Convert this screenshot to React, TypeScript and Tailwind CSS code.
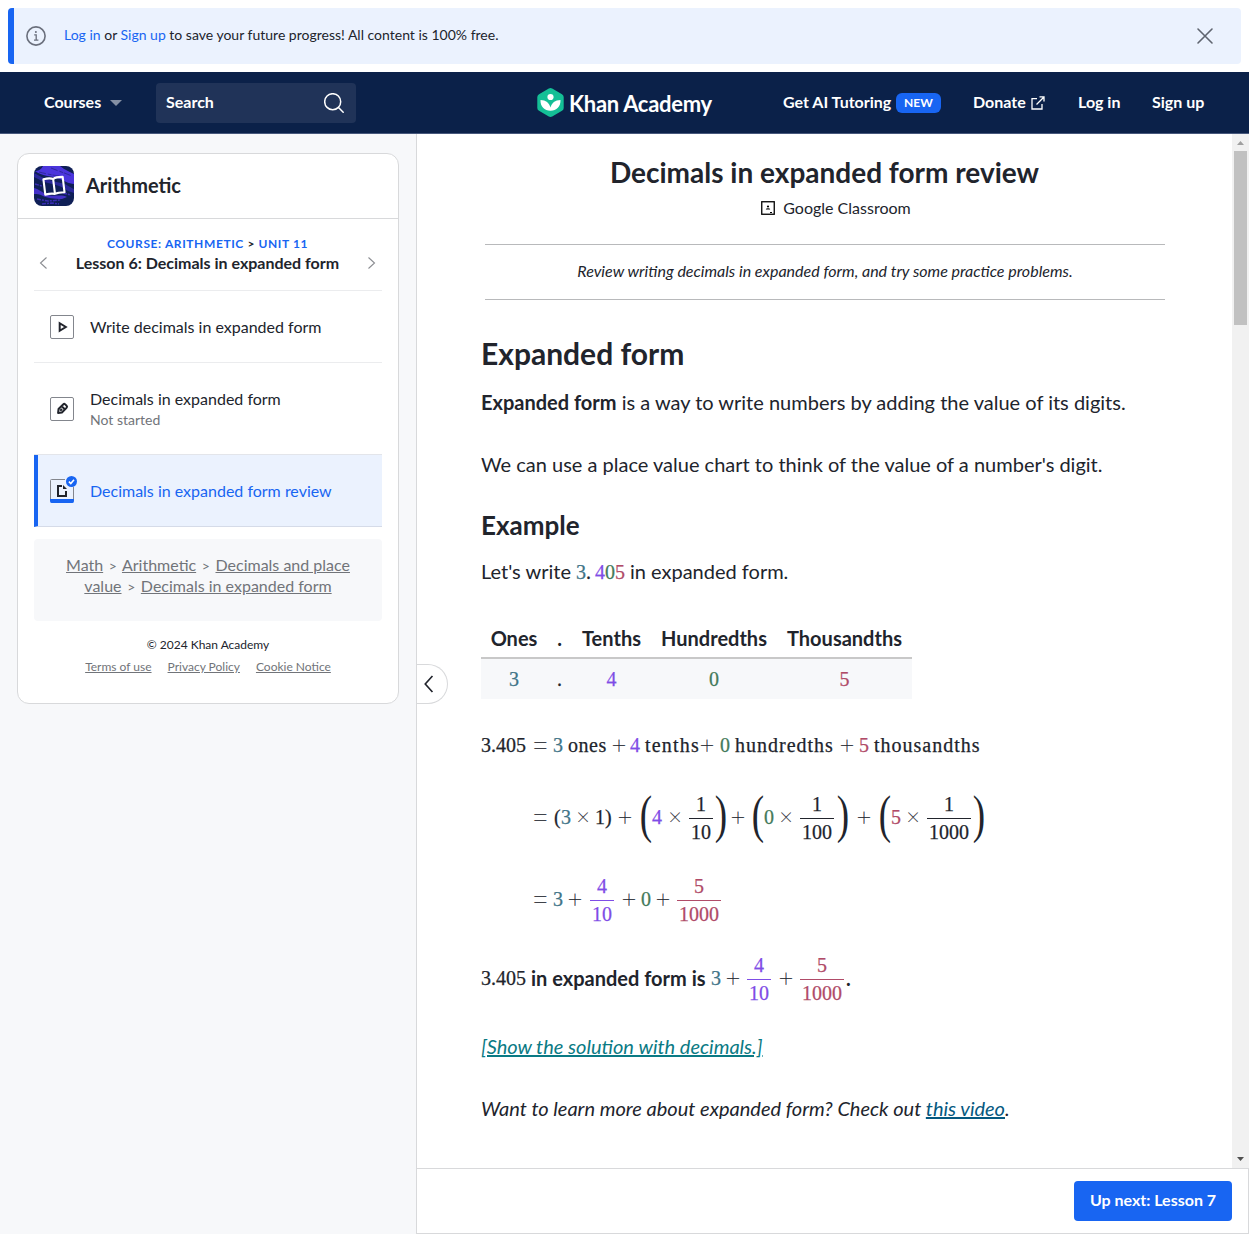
import React from "react";

const TEAL = "text-[#3f7487]";
const PURPLE = "text-[#7f4de6]";
const GREEN = "text-[#447a5a]";
const RED = "text-[#b04b68]";

const OP_SIZE: Record<string, string> = {
  "×": "text-[23px]",
  "+": "text-[29px]",
  "=": "text-[29px] scale-x-[1.2]",
};

function Op({ ch, className = "" }: { ch: string; className?: string }) {
  return (
    <span className={"-mt-0.5 inline-flex w-4 shrink-0 justify-center text-[#21242c] " + className}>
      <span className={"block font-['Inter'] font-thin leading-[30px] [-webkit-text-stroke:0.2px] " + OP_SIZE[ch]}>{ch}</span>
    </span>
  );
}

function Num({ children, className = "" }: { children: React.ReactNode; className?: string }) {
  return <span className={"inline-block w-2.5 shrink-0 text-center " + className}>{children}</span>;
}

function Word({ children, className = "" }: { children: React.ReactNode; className?: string }) {
  return <span className={"inline-block shrink-0 whitespace-nowrap " + className}>{children}</span>;
}

function Paren({ ch, className = "" }: { ch: string; className?: string }) {
  return (
    <span className={"-mt-1.5 inline-flex h-[60px] w-3 shrink-0 items-center justify-center [-webkit-text-stroke:0px] " + className}>
      <span className="block scale-x-[0.7] text-[53px] leading-[60px]">{ch}</span>
    </span>
  );
}

function Frac({ top, bottom, className = "" }: { top: string; bottom: string; className?: string }) {
  return (
    <span className={"mt-[3px] inline-flex shrink-0 flex-col self-start text-center " + className}>
      <span className="block h-7 leading-7">{top}</span>
      <span className="block h-px bg-current" />
      <span className="block h-[26px] leading-[26px]">{bottom}</span>
    </span>
  );
}

function MathRow({ children, className = "" }: { children: React.ReactNode; className?: string }) {
  return (
    <div className={"flex items-center font-['Liberation_Serif',serif] text-[20px] leading-[30px] [-webkit-text-stroke:0.25px] " + className}>
      {children}
    </div>
  );
}

function Banner() {
  return (
    <div className="mx-2 mt-2 flex h-14 shrink-0 items-center rounded border-l-[6px] border-[#1865f2] bg-[#ebf2fe] pl-3 pr-[27px]">
      <svg width="20" height="20" viewBox="0 0 20 20" fill="none" stroke="#6a6f7c" strokeWidth="1.6">
        <circle cx="10" cy="10" r="9.1" />
        <path d="M8.2 8.8H10.2V14M8 14.2H12.4" strokeWidth="1.3" />
        <circle cx="9.900" cy="6" r="1" fill="#6a6f7c" stroke="none" />
      </svg>
      <p className="ml-[18px] mt-[-2px] flex-1 text-[14px] leading-5">
        <span className="text-[#1865f2]">Log in</span> or <span className="text-[#1865f2]">Sign up</span> to save your future
        progress! All content is 100% free.
      </p>
      <svg width="18" height="18" viewBox="0 0 18 18" fill="none" stroke="#5f646f" strokeWidth="1.600" strokeLinecap="round">
        <path d="M2 2L16 16M16 2L2 16" />
      </svg>
    </div>
  );
}

function Header() {
  return (
    <header className="mt-2 flex h-[62px] shrink-0 items-center border-b border-[#47587c] bg-[#0b2149] pl-11 text-[16px] font-bold leading-6 text-white">
      <span className="-mt-0.5 w-[58px]">Courses</span>
      <svg className="ml-2 mt-px" width="12" height="6" viewBox="0 0 12 6">
        <path d="M0 0H12L6 6Z" fill="#8590a4" />
      </svg>
      <div className="ml-[34px] flex h-10 w-[200px] items-center justify-between rounded bg-[#203358] pl-[10px] pr-3">
        <span className="-mt-0.5">Search</span>
        <svg width="20" height="20" viewBox="0 0 20 20" fill="none" stroke="#fff" strokeWidth="1.500" strokeLinecap="round">
          <circle cx="8.700" cy="8.700" r="8" />
          <path d="M14.500 14.500L19.200 19.200" />
        </svg>
      </div>
      <div className="ml-[181px] flex w-[246px] items-center">
        <svg width="27" height="29" viewBox="0 0 27 29">
          <path d="M11.800 .6a3.400 3.400 0 0 1 3.400 0L25 6.200A3.400 3.400 0 0 1 26.700 9.100V19.900A3.400 3.400 0 0 1 25 22.800L15.200 28.400a3.400 3.400 0 0 1-3.400 0L2 22.800A3.400 3.400 0 0 1 .3 19.900V9.100A3.400 3.400 0 0 1 2 6.200Z" fill="#14bf96" />
          <circle cx="13.500" cy="9" r="3.100" fill="#fff" />
          <path d="M3.500 12C8.800 12 12.400 15 13.500 19.500C14.600 15 18.200 12 23.500 12C23.800 18.500 19.600 22.700 13.500 22.700S3.200 18.500 3.500 12Z" fill="#fff" />
        </svg>
        <span className="ml-[5px] mt-0.5 whitespace-nowrap text-[22px] leading-6 tracking-[-0.3px]">Khan Academy</span>
      </div>
      <span className="-mt-0.5 w-[108px] whitespace-nowrap">Get AI Tutoring</span>
      <span className="ml-[5px] flex h-5 w-[45px] items-center justify-center rounded-[6px] bg-[#1865f2] text-[12px] leading-5">NEW</span>
      <span className="-mt-0.5 ml-8 w-[53px]">Donate</span>
      <svg className="ml-[5px]" width="14" height="14" viewBox="0 0 14 14" fill="none" stroke="#fff" strokeWidth="1.300">
        <path d="M6 2.700H1V13H11V8M8.500 .9H13V5.500M13 1L5.500 8.500" />
      </svg>
      <span className="-mt-0.5 ml-[33px] w-[42px] whitespace-nowrap">Log in</span>
      <span className="-mt-0.5 ml-8 whitespace-nowrap">Sign up</span>
    </header>
  );
}

function CourseTile() {
  return (
    <svg width="40" height="40" viewBox="0 0 40 40" className="rounded-lg">
      <rect width="40" height="40" fill="#0f1f56" />
      <path d="M9 0H26C31 4 36 6 40 8V18C35 18 29 14 23 12S8 10 1 5C4 5 7 4 9 0Z" fill="#4b35dc" />
      <path d="M0 11C5 13 9 16 14 17S28 20 34 25L40 27V23C35 21 33 18 27 17S10 13 0 7Z" fill="#2a289a" />
      <path d="M0 22C5 23 9 27 14 29S28 28 33 31L28 33C20 33 13 32 9 30S3 28 0 28Z" fill="#4431c8" />
      <path d="M3 33L14 35L27 34M8 38L18 37L25 38M29 27L37 29M1 18L8 20" fill="none" stroke="#3a2db4" strokeWidth="1.500" strokeDasharray="4 1 2 1" />
      <path d="M17 2C24 5 31 7 38 10M5 6C13 8 18 9 25 10" fill="none" stroke="#1b2271" strokeWidth=".6" strokeDasharray="7 2 4 1" />
      <g transform="rotate(-7 20 20)" fill="none" stroke="#fff" strokeWidth="2.100" strokeLinejoin="round">
        <path d="M20 13C17.500 11.500 14 11.500 10.300 12V27.500C14 27 17.500 27 20 28C22.500 27 26 27 29.700 27.500V12C26 11.500 22.500 11.500 20 13ZM20 13V28" />
      </g>
    </svg>
  );
}

function Chevron({ d, size = 12, color = "#8b8d92" }: { d: string; size?: number; color?: string }) {
  return (
    <svg width={size} height={size} viewBox="0 0 12 12" fill="none" stroke={color} strokeWidth="1.100">
      <path d={d} />
    </svg>
  );
}

function Crumb({ children }: { children: React.ReactNode }) {
  return <span className="underline">{children}</span>;
}

function CrumbSeparator() {
  return <span className="mx-[1.5px] inline-block text-[14px] leading-4">&gt;</span>;
}

function Sidebar() {
  return (
    <aside className="w-[417px] shrink-0 border-r border-[#d8d9db] bg-[#f7f8fa] pl-[17px] pt-[19px]">
      <div className="h-[551px] w-[382px] rounded-xl border border-[#d8d9db] bg-white">
        <div className="flex h-[65px] items-center border-b border-[#d8d9db] pl-4">
          <CourseTile />
          <h2 className="-mt-[3px] ml-3 text-[20px] font-bold leading-6">Arithmetic</h2>
        </div>
        <div className="mx-4 flex h-[72px] items-center justify-between border-b border-[#ebecee] pl-1 pr-[5px] pt-[9px]">
          <div className="pt-2"><Chevron d="M8.500 .5L2.500 6L8.500 11.500" /></div>
          <div className="mt-[-9px] text-center">
            <div className="text-[12px] font-bold leading-[18px] tracking-[0.6px] text-[#1865f2]">
              COURSE: ARITHMETIC <span className="text-[#21242c]">&gt;</span> UNIT 11
            </div>
            <div className="-mt-px pb-px text-[16px] font-bold leading-[21px]">Lesson 6: Decimals in expanded form</div>
          </div>
          <div className="pt-2"><Chevron d="M3.500 .5L9.500 6L3.500 11.500" /></div>
        </div>
        <div className="mx-4 flex h-[72px] items-center border-b border-[#ebecee] pl-4">
          <svg width="24" height="24" viewBox="0 0 24 24" fill="none">
            <rect x=".5" y=".5" width="23" height="23" rx="1.500" stroke="#83868d" />
            <path d="M9.700 8.200V15.800L15.800 12Z" stroke="#21242c" strokeWidth="2" />
          </svg>
          <span className="ml-4 text-[16px] leading-5">Write decimals in expanded form</span>
        </div>
        <div className="mx-4 flex h-[92px] items-center border-b border-[#e3e5ea] pl-4">
          <svg width="24" height="24" viewBox="0 0 24 24" fill="none">
            <rect x=".5" y=".5" width="23" height="23" rx="1.500" stroke="#83868d" />
            <g transform="rotate(45 12 12)" stroke="#21242c" strokeWidth="2" strokeLinejoin="round">
              <path d="M9.600 8Q9.600 6.500 11 6.500H13Q14.400 6.500 14.400 8V14.500L12 17.500L9.600 14.500ZM9.600 10.200H14.400M12 12V14.500" />
            </g>
          </svg>
          <div className="ml-4 mt-0.5">
            <div className="text-[16px] leading-5">Decimals in expanded form</div>
            <div className="text-[14px] leading-[22px] text-[#717479]">Not started</div>
          </div>
        </div>
        <div className="mx-4 flex h-[72px] items-center border-b border-l-4 border-b-[#d5dbe8] border-l-[#1865f2] bg-[#ebf2fe] pl-3">
          <svg width="28" height="28" viewBox="0 0 28 28" fill="none" className="-mt-[3px]">
            <path d="M15 4.500H1.500Q.5 4.500 .5 5.500V24M23.500 12V24" stroke="#83868d" />
            <path d="M0 24H24V26Q24 28 22.500 28H1.500Q0 28 0 26Z" fill="#1865f2" />
            <path d="M12 11H8V21H16V16" stroke="#21242c" strokeWidth="2" />
            <path d="M13 10L17 14H13Z" fill="#21242c" />
            <circle cx="21.500" cy="6.500" r="5.500" fill="#1865f2" />
            <path d="M18.900 6.700L20.800 8.500L24 4.800" stroke="#fff" strokeWidth="1.600" />
          </svg>
          <span className="ml-3 text-[16px] leading-5 text-[#1865f2]">Decimals in expanded form review</span>
        </div>
        <div className="mx-4 mt-3 h-[82px] rounded bg-[#f7f8fa] px-5 pt-[15px] text-center text-[16px] leading-[21px] text-[#717479]">
          <Crumb>Math</Crumb> <CrumbSeparator /> <Crumb>Arithmetic</Crumb> <CrumbSeparator />{" "}
          <Crumb>
            Decimals and place
            <br />
            value
          </Crumb>{" "}
          <CrumbSeparator /> <Crumb>Decimals in expanded form</Crumb>
        </div>
        <div className="mt-[14px] text-center text-[12px] leading-5">© 2024 Khan Academy</div>
        <div className="mt-[2px] flex justify-center gap-4 text-[12px] leading-5 text-[#717479] underline">
          <span>Terms of use</span>
          <span>Privacy Policy</span>
          <span>Cookie Notice</span>
        </div>
      </div>
    </aside>
  );
}

function PlaceValueTable() {
  const th = "h-[40px] border-b-2 border-[#c8c8c8] p-0 font-bold";
  const td = "p-0 pb-px [-webkit-text-stroke:0.25px]";
  return (
    <table className="mt-8 w-[431px] table-fixed border-separate border-spacing-0 text-center text-[20px] leading-[30px]">
      <thead>
        <tr>
          <th className={th + " w-[66px]"}>Ones</th>
          <th className={th + " w-[25px]"}>.</th>
          <th className={th + " w-[79px]"}>Tenths</th>
          <th className={th + " w-[126px]"}>Hundredths</th>
          <th className={th + " w-[135px]"}>Thousandths</th>
        </tr>
      </thead>
      <tbody className="font-['Liberation_Serif',serif]">
        <tr className="h-10 bg-[#f7f8fa]">
          <td className={td + " " + TEAL}>3</td>
          <td className={td}>.</td>
          <td className={td + " " + PURPLE}>4</td>
          <td className={td + " " + GREEN}>0</td>
          <td className={td + " " + RED}>5</td>
        </tr>
      </tbody>
    </table>
  );
}

function Article() {
  return (
    <article className="min-h-0 flex-1 overflow-hidden pt-[22px] text-[20px] leading-[30px]">
      <h1 className="text-center text-[28px] font-bold leading-8">Decimals in expanded form review</h1>
      <div className="mt-2 flex h-6 items-center justify-center pl-[23px] text-[16px] leading-6">
        <svg className="mr-2 -mt-px" width="14" height="14" viewBox="0 0 14 14">
          <rect x=".75" y=".75" width="12.500" height="12.500" fill="none" stroke="#000" strokeWidth="1.300" />
          <circle cx="7" cy="5.500" r="1.100" />
          <path d="M4.800 8.600Q4.800 7.200 7 7.200T9.200 8.600ZM9 11H11V12H9Z" />
        </svg>
        Google Classroom
      </div>
      <p className="ml-[68px] mt-6 h-14 w-[680px] border-y border-[#b8b9bb] text-center text-[16px] italic leading-[51px]">
        Review writing decimals in expanded form, and try some practice problems.
      </p>
      <div className="pl-16">
        <h2 className="mt-[33px] text-[30px] font-bold leading-10">Expanded form</h2>
        <p className="mt-[14px]">
          <b>Expanded form</b> is a way to write numbers by adding the value of its digits.
        </p>
        <p className="mt-8">We can use a place value chart to think of the value of a number's digit.</p>
        <h3 className="mt-[31px] text-[26px] font-bold leading-[30px]">Example</h3>
        <p className="mt-4 flex">
          <span className="w-[95px]">Let's write</span>
          <span className="w-[54px] pt-px font-['Liberation_Serif',serif] [-webkit-text-stroke:0.25px]">
            <span className={TEAL}>3</span>
            <span className="mr-1">.</span>
            <span className={PURPLE}>4</span>
            <span className={GREEN}>0</span>
            <span className={RED}>5</span>
          </span>
          <span>in expanded form.</span>
        </p>
        <PlaceValueTable />
        <MathRow className="mt-[31px] h-[30px]">
          <Word className="w-[45px]">3.405</Word>
          <Op ch="=" className="ml-1.5" />
          <Num className={"ml-[5px] " + TEAL}>3</Num>
          <Word className="ml-[5px] w-[39px] tracking-[0.5px]">ones</Word>
          <Op ch="+" className="ml-1" />
          <Num className={"ml-[3px] " + PURPLE}>4</Num>
          <Word className="ml-[5px] w-[54px] tracking-[1.2px]">tenths</Word>
          <Op ch="+" />
          <Num className={"ml-[5px] " + GREEN}>0</Num>
          <Word className="ml-[5px] w-[99px] tracking-[1px]">hundredths</Word>
          <Op ch="+" className="ml-[5px]" />
          <Num className={"ml-1 " + RED}>5</Num>
          <Word className="ml-[5px] w-[106px] tracking-[1px]">thousandths</Word>
        </MathRow>
        <MathRow className="mt-[27px] h-[60px]">
          <Op ch="=" className="ml-[51px]" />
          <Word className="ml-1.5 w-[7px]">(</Word>
          <Num className={TEAL}>3</Num>
          <Op ch="×" className="ml-1" />
          <Num className="ml-1">1</Num>
          <Word className="w-[7px]">)</Word>
          <Op ch="+" className="ml-[5px]" />
          <Paren ch="(" className="ml-[7px]" />
          <Num className={PURPLE}>4</Num>
          <Op ch="×" className="ml-[5px]" />
          <Frac top="1" bottom="10" className="ml-1.5 w-6" />
          <Paren ch=")" className="ml-0.5" />
          <Op ch="+" className="ml-[3px]" />
          <Paren ch="(" className="ml-1.5" />
          <Num className={GREEN}>0</Num>
          <Op ch="×" className="ml-1" />
          <Frac top="1" bottom="100" className="ml-1.5 w-[34px]" />
          <Paren ch=")" className="ml-[3px]" />
          <Op ch="+" className="ml-[7px]" />
          <Paren ch="(" className="ml-[7px]" />
          <Num className={RED}>5</Num>
          <Op ch="×" className="ml-1" />
          <Frac top="1" bottom="1000" className="ml-1.5 w-11" />
          <Paren ch=")" className="ml-0.5" />
        </MathRow>
        <MathRow className="mt-[22px] h-[60px]">
          <Op ch="=" className="ml-[51px]" />
          <Num className={"ml-[5px] " + TEAL}>3</Num>
          <Op ch="+" className="ml-1" />
          <Frac top="4" bottom="10" className={"ml-[7px] w-6 " + PURPLE} />
          <Op ch="+" className="ml-[7px]" />
          <Num className={"ml-1 " + GREEN}>0</Num>
          <Op ch="+" className="ml-1" />
          <Frac top="5" bottom="1000" className={"ml-1.5 w-11 " + RED} />
        </MathRow>
        <MathRow className="mt-[19px] h-[60px]">
          <Word className="w-[45px]">3.405</Word>
          <Word className="ml-[5px] w-[175px] font-['Lato'] font-bold [-webkit-text-stroke:0px]">in expanded form is</Word>
          <Num className={"ml-[5px] " + TEAL}>3</Num>
          <Op ch="+" className="ml-1" />
          <Frac top="4" bottom="10" className={"ml-1.5 w-6 " + PURPLE} />
          <Op ch="+" className="ml-[7px]" />
          <Frac top="5" bottom="1000" className={"ml-1.5 w-11 " + RED} />
          <Word className="ml-[2px] font-['Lato'] font-bold [-webkit-text-stroke:0px]">.</Word>
        </MathRow>
        <p className="mt-[23px] italic text-[#0a7a84] underline">[Show the solution with decimals.]</p>
        <p className="mt-8 italic">
          Want to learn more about expanded form? Check out <span className="text-[#05587f] underline">this video</span>.
        </p>
      </div>
    </article>
  );
}

function Scrollbar() {
  return (
    <div className="flex w-[17px] shrink-0 flex-col items-center bg-[#f1f1f1]">
      <svg width="17" height="17" viewBox="0 0 17 17">
        <path d="M5 11L8.500 7L12 11Z" fill="#a0a0a0" />
      </svg>
      <div className="h-[174px] w-[13px] bg-[#c1c1c1]" />
      <svg className="mt-auto" width="17" height="17" viewBox="0 0 17 17">
        <path d="M5 6L8.500 10L12 6Z" fill="#505050" />
      </svg>
    </div>
  );
}

export default function App() {
  return (
    <div className="flex h-[1234px] w-[1249px] flex-col overflow-hidden bg-white font-['Lato',sans-serif] text-[#21242c]">
      <Banner />
      <Header />
      <div className="flex min-h-0 flex-1">
        <Sidebar />
        <main className="relative flex min-w-0 flex-1 flex-col">
          <button className="absolute left-0 top-[530px] flex h-10 w-[31px] items-center rounded-r-full border border-l-0 border-[#d8d9db] bg-white pl-[3px]">
            <Chevron d="M8.300 .7L3.500 6L8.300 11.300" size={18} color="#21242c" />
          </button>
          <div className="flex h-[1034px] min-h-0">
            <Article />
            <Scrollbar />
          </div>
          <footer className="flex h-[66px] items-center justify-end border-y border-r border-[#d8d9db] pr-4">
            <button className="h-10 w-[158px] rounded bg-[#1865f2] pb-[2px] text-[16px] font-bold leading-5 text-white">
              Up next: Lesson 7
            </button>
          </footer>
        </main>
      </div>
    </div>
  );
}
